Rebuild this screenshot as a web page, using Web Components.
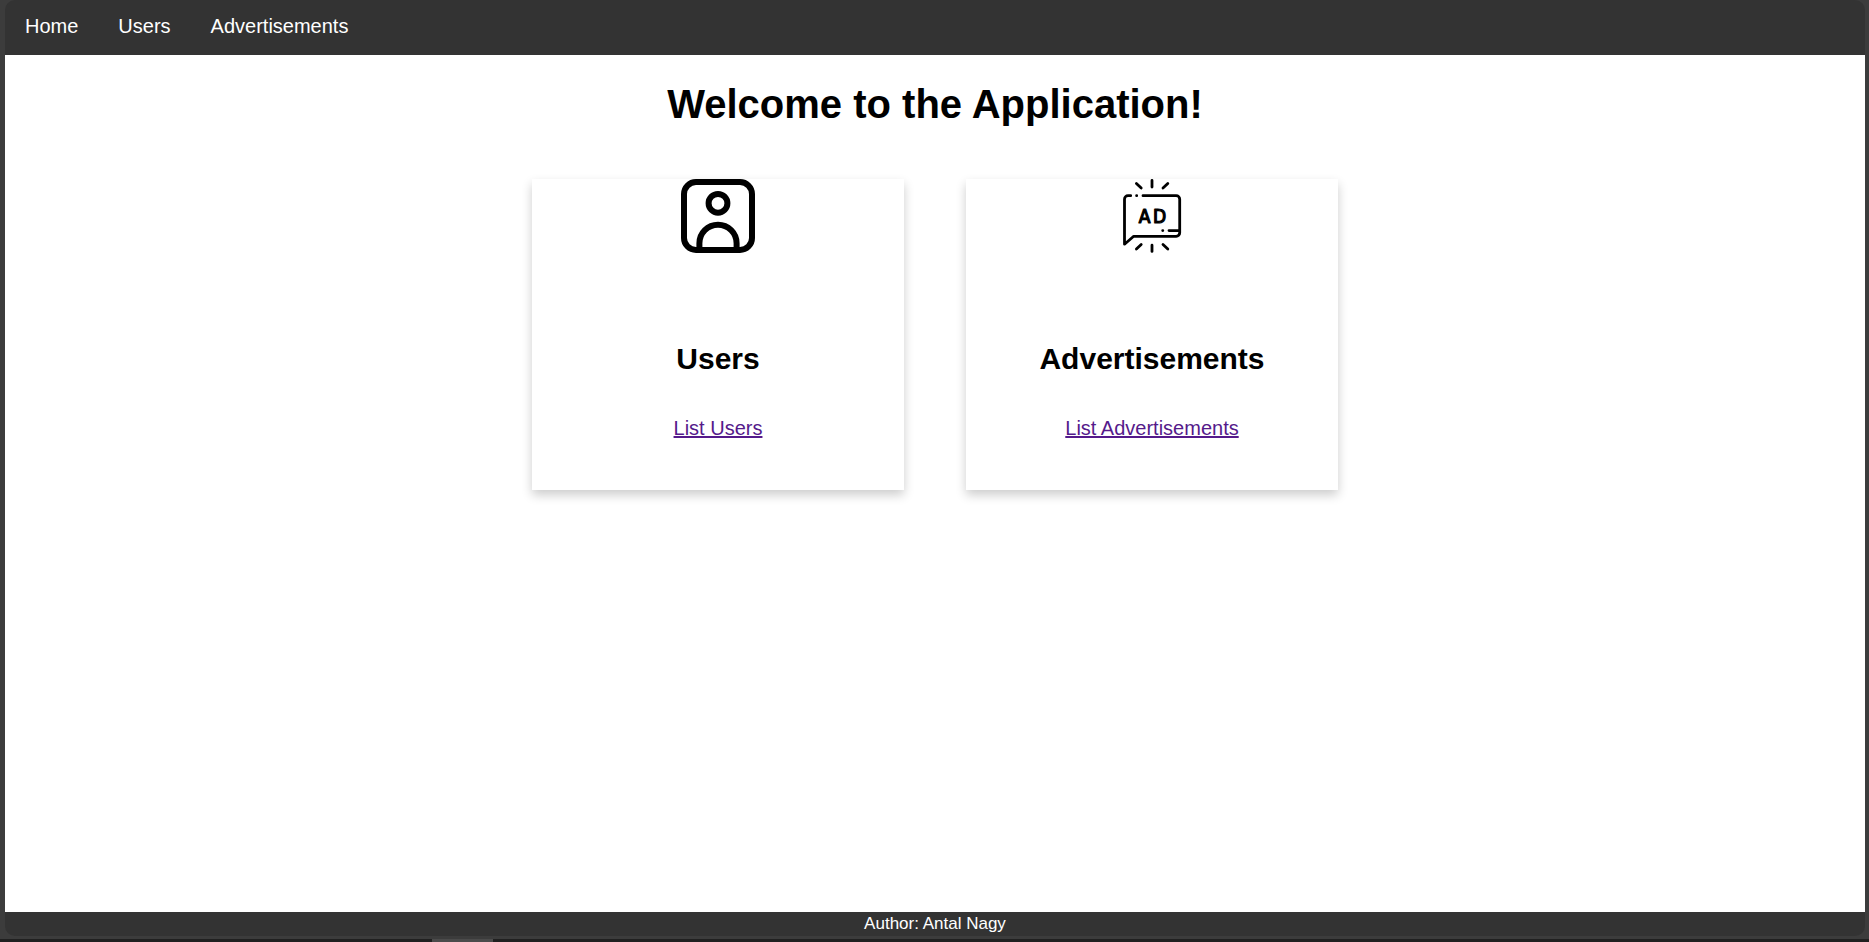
<!DOCTYPE html>
<html lang="en">
<head>
<meta charset="utf-8">
<title>Application</title>
<style>
  html, body { margin: 0; height: 100%; }
  body { background: #3c3c3c; font-family: "Liberation Sans", Arial, sans-serif; font-size: 20px; color: #000; }
</style>
</head>
<body>
<app-window>
  <nav-bar slot="top">
    <nav-item href="#home">Home</nav-item>
    <nav-item href="#users">Users</nav-item>
    <nav-item href="#advertisements">Advertisements</nav-item>
  </nav-bar>
  <page-title>Welcome to the Application!</page-title>
  <card-row>
    <link-card href="#users">
      <user-icon slot="icon"></user-icon>
      <span slot="title">Users</span>
      List Users
    </link-card>
    <link-card href="#advertisements">
      <ad-icon slot="icon"></ad-icon>
      <span slot="title">Advertisements</span>
      List Advertisements
    </link-card>
  </card-row>
  <page-footer slot="bottom">Author: Antal Nagy</page-footer>
</app-window>
<script>
  const define = (name, html, setup) => {
    const template = document.createElement('template');
    template.innerHTML = html;
    customElements.define(name, class extends HTMLElement {
      constructor() {
        super();
        this.attachShadow({ mode: 'open' }).append(template.content.cloneNode(true));
      }
      connectedCallback() {
        if (setup) setup(this);
      }
    });
  };
  const passHref = el => {
    el.shadowRoot.querySelector('a').href = el.getAttribute('href');
  };

  define('app-window', `
    <style>
      :host { display: flex; flex-direction: column; height: 100vh; min-height: 560px; background: #3c3c3c; }
      .frame { flex: 1; display: flex; flex-direction: column; margin: 0 4px 3px 5px; }
      main { flex: 1; padding-top: 26px; background: #fff; }
      .strip { display: flex; height: 3px; background: #202020; }
      .strip i { width: 61px; margin-left: 432px; background: #4b4b4b; }
    </style>
    <div class="frame">
      <slot name="top"></slot>
      <main><slot></slot></main>
      <slot name="bottom"></slot>
    </div>
    <div class="strip"><i></i></div>`);

  define('nav-bar', `
    <style>
      :host { display: block; background: #333; border-radius: 10px 10px 0 0; }
      nav { display: flex; height: 55px; }
    </style>
    <nav><slot></slot></nav>`);

  define('nav-item', `
    <style>
      :host { display: block; }
      a { display: block; padding: 14px 20px; line-height: 24px; color: #fff; text-decoration: none; }
    </style>
    <a><slot></slot></a>`, passHref);

  define('page-title', `
    <style>
      :host { display: block; }
      h1 { margin: 0; font-size: 40px; line-height: 46px; text-align: center; }
    </style>
    <h1><slot></slot></h1>`);

  define('card-row', `
    <style>
      :host { display: flex; justify-content: center; gap: 62px; margin-top: 52px; }
    </style>
    <slot></slot>`);

  define('link-card', `
    <style>
      :host { display: flex; flex-direction: column; align-items: center; width: 20%; text-align: center; background: #fff; box-shadow: 0 5px 10px 0 rgba(0, 0, 0, 0.2); }
      h2 { margin: 88px 0 39px; font-size: 30px; line-height: 36px; }
      a { margin-bottom: 50px; line-height: 24px; color: #551a8b; }
    </style>
    <slot name="icon"></slot>
    <h2><slot name="title"></slot></h2>
    <a><slot></slot></a>`, passHref);

  define('user-icon', `
    <style>
      :host { display: block; width: 74px; height: 74px; }
      svg { display: block; }
    </style>
    <svg viewBox="0 0 74 74" fill="none" stroke="#000" stroke-width="6" aria-hidden="true">
      <rect x="3" y="3" width="68" height="68" rx="12"/>
      <circle cx="37" cy="24.3" r="9.4"/>
      <path d="M18.4 71V64.3a18.6 18.6 0 0 1 37.2 0V71"/>
    </svg>`);

  define('ad-icon', `
    <style>
      :host { display: block; width: 74px; height: 74px; }
      svg { display: block; }
      text { font-family: "DejaVu Sans Condensed", "DejaVu Sans", sans-serif; font-size: 19px; }
    </style>
    <svg viewBox="0 0 74 74" fill="none" stroke="#000" stroke-width="2.8" stroke-linecap="round" stroke-linejoin="round" aria-hidden="true">
      <path d="M37 1.4V8M21.4 4.4 26.2 9M52.8 4.4 48 9M37 66.2V72.4M26.2 65.4 21.4 70M48 65.4 52.8 70"/>
      <path d="M15.7 16.7H13a3.5 3.5 0 0 0-3.5 3.5V65.2L18.7 57.3H61.2a3.5 3.5 0 0 0 3.5-3.5V20.2a3.5 3.5 0 0 0-3.5-3.5H28"/>
      <path d="M21.6 16.7h.1M47.7 51.6h.1M54 51.6H64.5"/>
      <text x="23.8 38" y="44" fill="#000" stroke="#000" stroke-width="1.2">AD</text>
    </svg>`);

  define('page-footer', `
    <style>
      :host { display: block; background: #333; border-radius: 0 0 10px 10px; }
      footer { font-size: 17px; line-height: 24px; text-align: center; color: #fff; }
    </style>
    <footer><slot></slot></footer>`);
</script>
</body>
</html>
